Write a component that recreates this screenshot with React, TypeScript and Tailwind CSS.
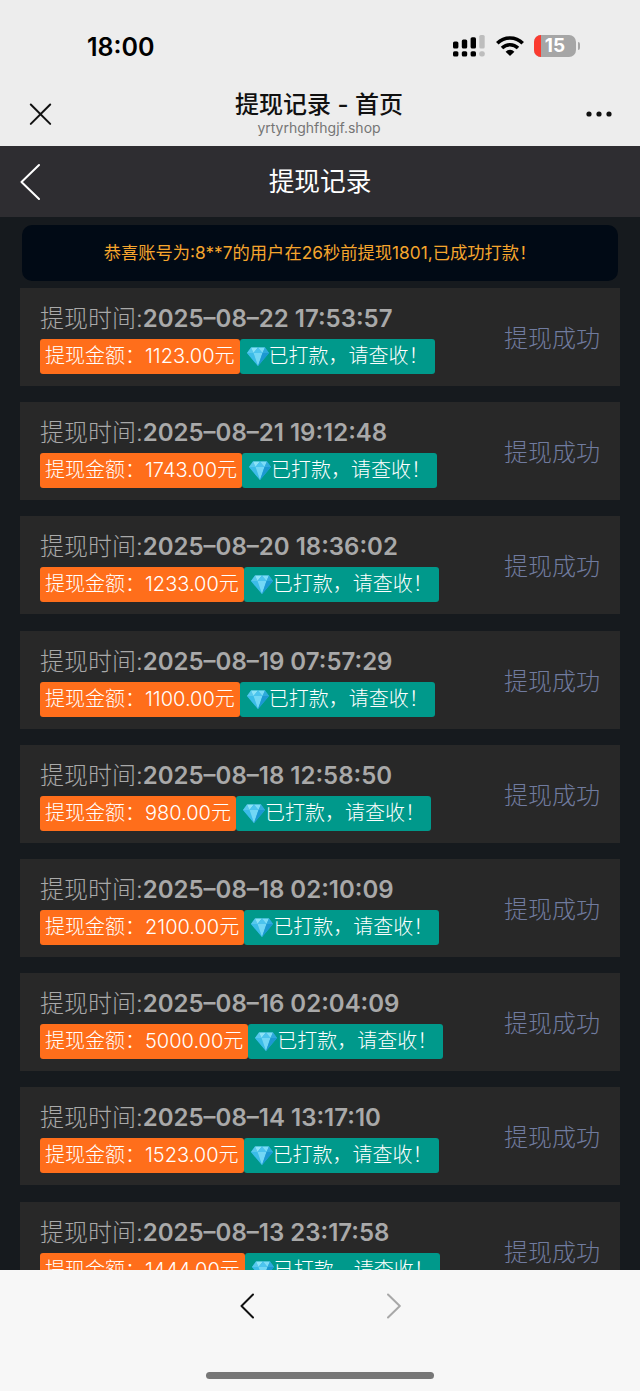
type WithdrawRecord = {
    time: string;
    amount: string;
};

const records: WithdrawRecord[] = [
    { time: "2025–08–22 17:53:57", amount: "1123.00" },
    { time: "2025–08–21 19:12:48", amount: "1743.00" },
    { time: "2025–08–20 18:36:02", amount: "1233.00" },
    { time: "2025–08–19 07:57:29", amount: "1100.00" },
    { time: "2025–08–18 12:58:50", amount: "980.00" },
    { time: "2025–08–18 02:10:09", amount: "2100.00" },
    { time: "2025–08–16 02:04:09", amount: "5000.00" },
    { time: "2025–08–14 13:17:10", amount: "1523.00" },
    { time: "2025–08–13 23:17:58", amount: "1444.00" },
];

function SignalIcon() {
    return (
        <svg width="32" height="22" viewBox="0 0 32 22" fill="#000">
            <rect x="0" y="6.5" width="5.4" height="7" rx="1.6" />
            <rect x="8.8" y="4.5" width="5.4" height="9" rx="1.6" />
            <rect x="17.6" y="2.2" width="5.4" height="11.3" rx="1.6" />
            <rect x="26.3" y="0" width="5.4" height="13.5" rx="1.6" fill="#bdbdbd" />
            <rect x="0" y="16.2" width="5.4" height="5.4" rx="1.6" />
            <rect x="8.8" y="16.2" width="5.4" height="5.4" rx="1.6" />
            <rect x="17.6" y="16.2" width="5.4" height="5.4" rx="1.6" />
            <rect x="26.3" y="16.2" width="5.4" height="5.4" rx="2" fill="#bdbdbd" />
        </svg>
    );
}

function WifiIcon() {
    return (
        <svg width="28" height="20" viewBox="0 0 28 20" fill="none">
            <path d="M1.3 7.2 A18 18 0 0 1 26.7 7.2" stroke="#000" strokeWidth="3.6" />
            <path d="M6 12 A11.3 11.3 0 0 1 22 12" stroke="#000" strokeWidth="3.5" />
            <path d="M9.6 15.7 A6.2 6.2 0 0 1 18.4 15.7 L14.5 19.6 Q14 20 13.5 19.6 Z" fill="#000" />
        </svg>
    );
}

function Battery() {
    return (
        <div className="flex items-center gap-[1.5px]">
            <div className="flex h-[22px] w-[42px] items-center overflow-hidden rounded-[7px] bg-[#a6a6a6]">
                <div className="h-full w-[7px] bg-[#fb3b30]" />
                <span className="w-[28px] text-center text-[19px] leading-[22px] font-bold text-white">15</span>
            </div>
            <div className="h-[8px] w-[2.5px] rounded-r-full bg-[#a6a6a6]" />
        </div>
    );
}

function Chevron({ className, width, d, stroke }: { className?: string; width: number; d: string; stroke: number }) {
    return (
        <svg className={className} width={width} height={width * 2} viewBox={`0 0 ${width} ${width * 2}`} fill="none">
            <path d={d} stroke="currentColor" strokeWidth={stroke} strokeLinecap="round" strokeLinejoin="round" />
        </svg>
    );
}

function Gem() {
    return (
        <svg className="mt-[8px] h-[19px] w-[22px] shrink-0" viewBox="0 0 22 19">
            <path d="M4 0.5 H18 L22 6 L11 19 L0 6 Z" fill="#29acdf" />
            <path d="M4 0.5 L0 6 H6.5 Z" fill="#56c8ec" />
            <path d="M4 0.5 H11 L6.5 6 Z" fill="#8ce3f7" />
            <path d="M11 0.5 L6.5 6 H15.5 Z" fill="#4cc4ee" />
            <path d="M11 0.5 H18 L15.5 6 Z" fill="#7cdcf6" />
            <path d="M18 0.5 L22 6 H15.5 Z" fill="#2ea9db" />
            <path d="M0 6 H6.5 L11 19 Z" fill="#3bbce8" />
            <path d="M6.5 6 H15.5 L11 19 Z" fill="#72d7f5" />
            <path d="M15.5 6 H22 L11 19 Z" fill="#1c98d2" />
        </svg>
    );
}

function RecordCard({ record }: { record: WithdrawRecord }) {
    return (
        <div className="flex h-[98px] shrink-0 items-start justify-between bg-[#282828] px-5">
            <div>
                <div className="flex h-[51px] items-center pt-[11px] text-[24px] whitespace-nowrap text-[#a9a9a9]">
                    <span className="font-light">提现时间:</span>
                    <span className="font-semibold">{record.time}</span>
                </div>
                <div className="flex text-[20px] leading-[35px] font-light whitespace-nowrap text-white">
                    <div className="h-[35px] rounded-[3px] bg-[#ff6e1b] px-[5px]">
                        提现金额：{record.amount}元
                    </div>
                    <div className="flex h-[35px] rounded-[3px] bg-[#00998b] pr-[6px] pl-[7px]">
                        <Gem />
                        <span>已打款，请查收！</span>
                    </div>
                </div>
            </div>
            <span className="mt-[33px] text-[24px] leading-[36px] font-light text-[#707b9f]">提现成功</span>
        </div>
    );
}

export default function App() {
    return (
        <div className="flex h-[1391px] w-[640px] flex-col overflow-hidden bg-[#161a1e] font-[Inter,'Noto_Sans_CJK_SC',sans-serif]">
            {/* Status bar + browser title */}
            <header className="h-[146px] shrink-0 bg-[#ededed]">
                <div className="flex h-[84px] items-start justify-between pr-[60px] pl-[87px]">
                    <span className="mt-[32px] text-[25px] leading-[30px] font-semibold text-black">18:00</span>
                    <div className="mt-[35px] flex items-center">
                        <SignalIcon />
                        <span className="mr-[10px] ml-[11px]">
                            <WifiIcon />
                        </span>
                        <Battery />
                    </div>
                </div>
                <div className="flex justify-between pr-[28px] pl-[29px]">
                    <svg className="mt-[19px]" width="23" height="23" viewBox="0 0 23 23" fill="none">
                        <path d="M1.8 1.5 L21.2 20.9 M21.2 1.5 L1.8 20.9" stroke="#111" strokeWidth="2" strokeLinecap="round" />
                    </svg>
                    <div className="pt-[6px] text-center">
                        <div className="text-[24px] leading-[30px] font-medium text-[#111]">提现记录 - 首页</div>
                        <div className="text-[14px] leading-[16px] text-[#757575]">yrtyrhghfhgjf.shop</div>
                    </div>
                    <svg className="mt-[26px]" width="26" height="8" viewBox="0 0 26 8" fill="#111">
                        <circle cx="3" cy="4" r="2.6" />
                        <circle cx="13" cy="4" r="2.6" />
                        <circle cx="23" cy="4" r="2.6" />
                    </svg>
                </div>
            </header>

            {/* Page nav */}
            <nav className="grid h-[71px] shrink-0 grid-cols-[1fr_auto_1fr] items-center bg-[#2e2d31] pl-5 text-white">
                <Chevron width={20} d="M19 3 L1.5 20 L19 37" stroke={2} />
                <h1 className="pr-5 text-[25.7px] leading-[36px] font-normal">提现记录</h1>
            </nav>

            <main className="min-h-0 flex-1 overflow-hidden px-5 pt-[8px]">
                <div className="mx-[2px] mb-[7px] flex h-[56px] items-center justify-center rounded-[10px] bg-[#010a15] text-[17.3px] whitespace-nowrap text-[#f5a52d]">
                    恭喜账号为:8**7的用户在26秒前提现1801,已成功打款！
                </div>
                <div className="flex flex-col gap-[16.2px]">
                    {records.map((record) => (
                        <RecordCard key={record.time} record={record} />
                    ))}
                </div>
            </main>

            {/* Browser toolbar */}
            <footer className="flex h-[121px] shrink-0 flex-col items-center justify-between bg-[#f7f7f7] pt-[23px] pb-[12px]">
                <div className="flex gap-[133px]">
                    <Chevron className="text-[#111]" width={14} d="M13 1.5 L1.5 13 L13 24.5" stroke={2} />
                    <Chevron className="text-[#a8a8a8]" width={14} d="M1 1.5 L12.8 13 L1 24.5" stroke={2} />
                </div>
                <div className="h-[7px] w-[228px] rounded-full bg-[#777]" />
            </footer>
        </div>
    );
}
